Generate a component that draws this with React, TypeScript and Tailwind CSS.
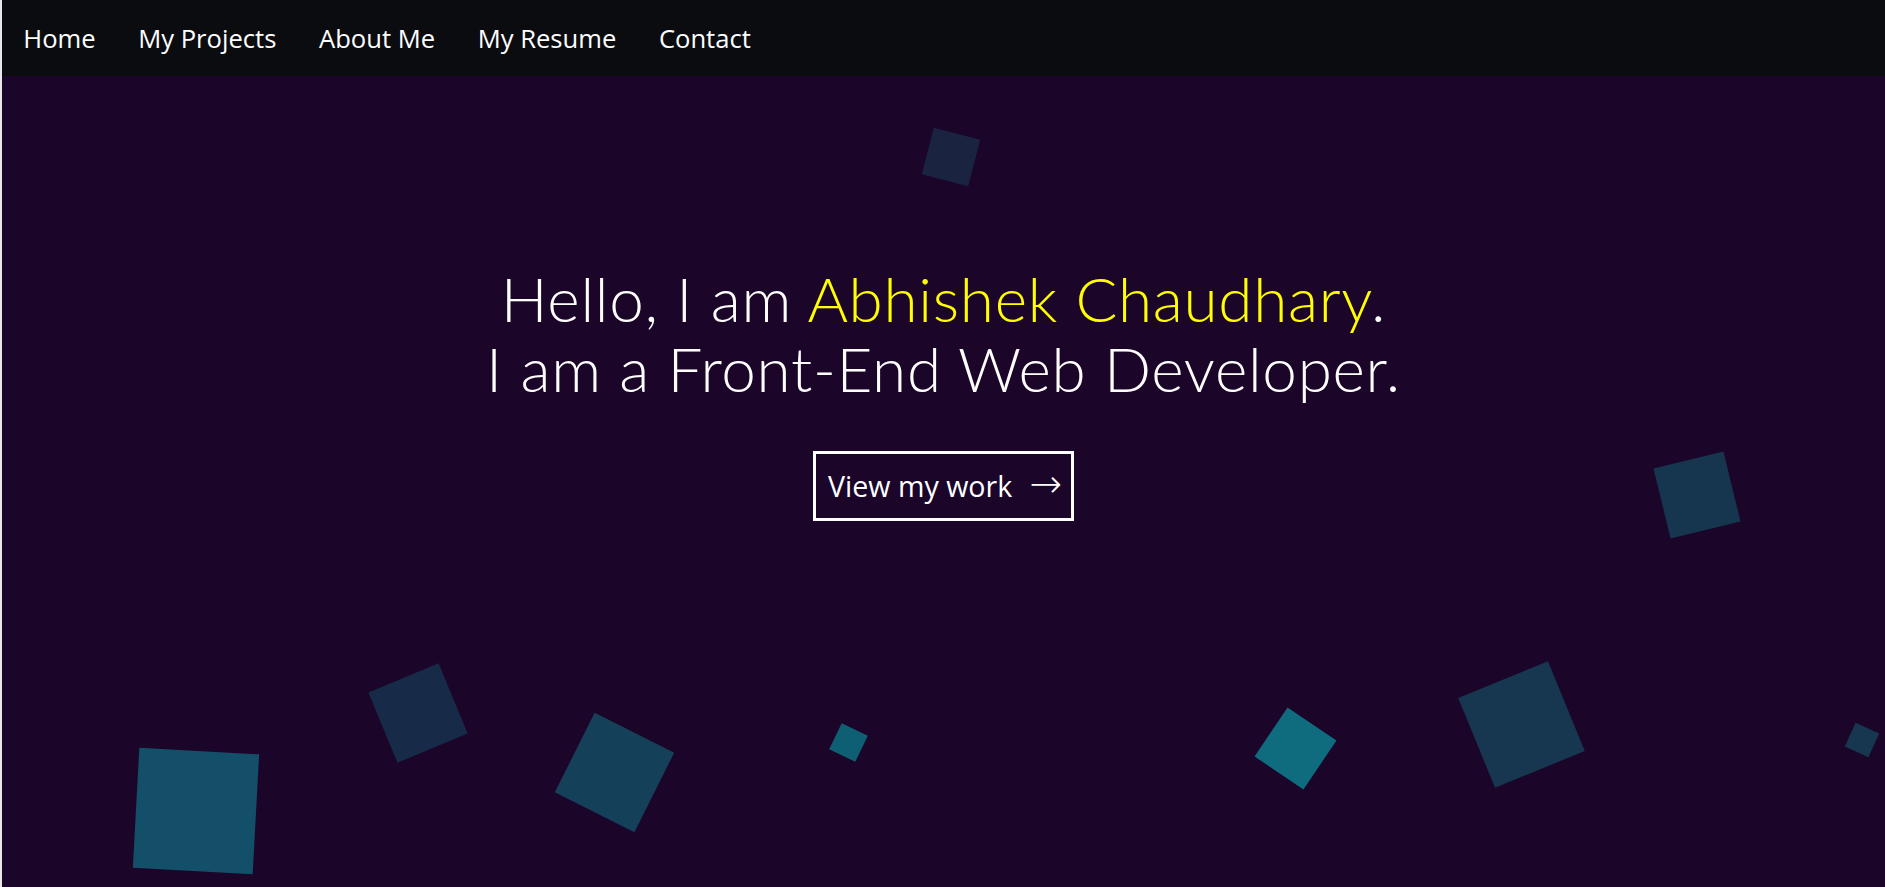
const links = ['Home', 'My Projects', 'About Me', 'My Resume', 'Contact'];

// decorative squares: centre x/y inside the hero, side, rotation, colour
const squares = [
  { x: 949, y: 81, s: 48, r: 14.6, c: '#1a2340' },
  { x: 1695, y: 419, s: 72, r: -13.7, c: '#16354f' },
  { x: 1293, y: 672, s: 59, r: 34, c: '#0f6b7e' },
  { x: 1519, y: 648, s: 97, r: -22.3, c: '#16374f' },
  { x: 1860, y: 664, s: 26, r: 24.6, c: '#16374f' },
  { x: 194, y: 735, s: 120, r: 3.1, c: '#134f68' },
  { x: 416, y: 637, s: 76, r: -22.5, c: '#172a48' },
  { x: 612, y: 696, s: 89, r: 26.6, c: '#15405a' },
  { x: 846, y: 666, s: 29, r: 25.7, c: '#0f5f74' },
];

function Navbar() {
  return (
    <nav className="h-[76px] bg-[#0b0c10] flex items-center">
      {links.map((l) => (
        <a
          key={l}
          href="#"
          className="px-[21.3px] text-white text-[25.6px] font-['Open_Sans',sans-serif] leading-none mt-[2px]"
        >
          {l}
        </a>
      ))}
    </nav>
  );
}

export default function App() {
  return (
    <div className="bg-[#e8e8e8] pl-[2px] min-h-screen">
      <Navbar />
      <section className="relative h-[811px] overflow-hidden bg-[#1b0529] flex flex-col items-center pt-[187px]">
        {squares.map((q, i) => (
          <div
            key={i}
            className="absolute"
            style={{
              left: q.x - q.s / 2,
              top: q.y - q.s / 2,
              width: q.s,
              height: q.s,
              background: q.c,
              transform: `rotate(${q.r}deg)`,
            }}
          />
        ))}
        <h1 className="relative text-center text-white text-[62px] leading-[70px] tracking-[0.7px] font-light font-['Lato',sans-serif]">
          Hello, I am <span className="text-[#ffff00]">Abhishek Chaudhary</span>.
          <br />
          I am a Front-End Web Developer.
        </h1>
        <button className="relative mt-[48px] w-[261px] h-[70px] border-[3px] border-white flex items-center pl-[12px] gap-[17px] text-white text-[28.6px] font-['Open_Sans',sans-serif]">
          <span>View my work</span>
          <span className="text-[39px] leading-none font-['DejaVu_Sans',sans-serif] font-extralight -mt-[5px]">→</span>
        </button>
      </section>
    </div>
  );
}
